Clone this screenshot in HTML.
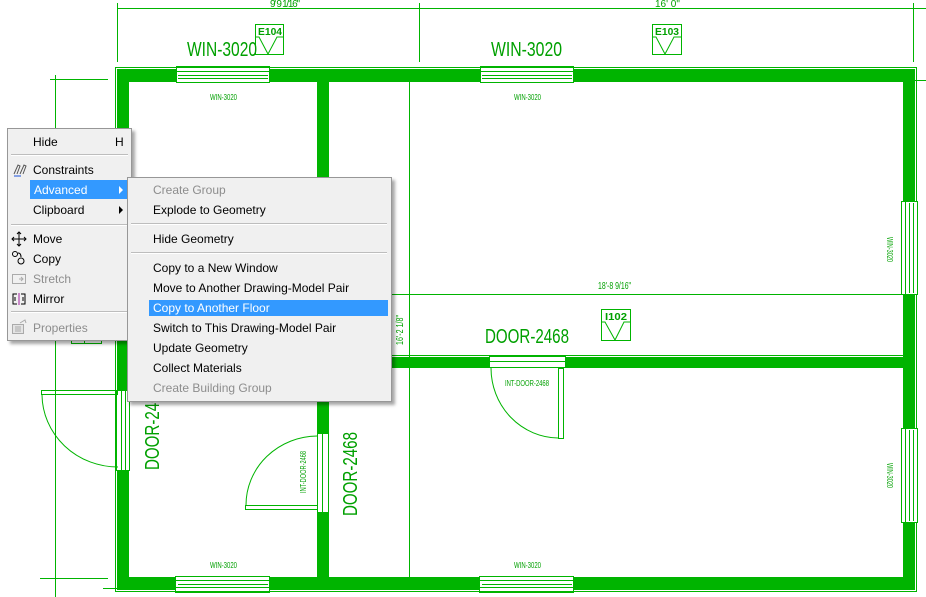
<!DOCTYPE html>
<html><head><meta charset="utf-8"><style>
html,body{margin:0;padding:0;width:926px;height:597px;overflow:hidden;background:#fff;font-family:"Liberation Sans",sans-serif}
svg{position:absolute;left:0;top:0}
.menu{position:absolute;background:#f0f0f0;border:1px solid #979797;box-shadow:3px 3px 3px rgba(0,0,0,0.35);font-size:12px;color:#000}
.it{position:absolute;height:19px;line-height:20px;white-space:nowrap}
.dis{color:#8d8d8d}
.hl{background:#3399ff;color:#fff}
.sep{position:absolute;height:1px;background:#bdbdbd;border-bottom:1px solid #fff}
.arr{position:absolute;width:0;height:0;border-top:4px solid transparent;border-bottom:4px solid transparent;border-left:4px solid #000}
</style></head><body>
<svg width="926" height="597" viewBox="0 0 926 597" xmlns="http://www.w3.org/2000/svg" font-family="Liberation Sans, sans-serif">
<g stroke="#00b400" fill="none" stroke-width="1">
<line x1="117" y1="8.5" x2="926" y2="8.5"/>
<line x1="117.5" y1="3" x2="117.5" y2="62"/>
<line x1="419.5" y1="3" x2="419.5" y2="62"/>
<line x1="913.5" y1="3" x2="913.5" y2="62"/>
<line x1="909" y1="80.5" x2="926" y2="80.5"/>
<line x1="50" y1="79.5" x2="108" y2="79.5"/>
<line x1="55.5" y1="75" x2="55.5" y2="597"/>
<line x1="40" y1="578.5" x2="108" y2="578.5"/>
<line x1="103" y1="588.5" x2="117" y2="588.5"/>
<rect x="115.5" y="67.5" width="801" height="524"/>
<line x1="328.5" y1="82" x2="328.5" y2="357"/>
<line x1="328.5" y1="368" x2="328.5" y2="577"/>
<line x1="409.5" y1="82" x2="409.5" y2="577"/>
<line x1="329" y1="294.5" x2="903" y2="294.5"/>
<line x1="329" y1="355.5" x2="903" y2="355.5"/>
</g>
<g fill="#00b400">
<rect x="117" y="69" width="798" height="13"/>
<rect x="117" y="577" width="798" height="13"/>
<rect x="117" y="69" width="12" height="521"/>
<rect x="903" y="69" width="12" height="521"/>
<rect x="317" y="69" width="11" height="364"/>
<rect x="317" y="512" width="11" height="78"/>
<rect x="328" y="357" width="575" height="11"/>
</g>
<g fill="#fff">
<rect x="176" y="68" width="93" height="15"/>
<rect x="480" y="68" width="93" height="15"/>
<rect x="176" y="576" width="93" height="15"/>
<rect x="480" y="576" width="93" height="15"/>
<rect x="901" y="201" width="16" height="93"/>
<rect x="901" y="428" width="16" height="94"/>
<rect x="489" y="357" width="76" height="11"/>
<rect x="316" y="433" width="13" height="79"/>
<rect x="116" y="390" width="14" height="80"/>
</g>
<g stroke="#00b400" fill="none" stroke-width="1">
<rect x="176.5" y="66.5" width="93" height="16"/><line x1="176" y1="71.5" x2="269" y2="71.5"/><line x1="178" y1="75.5" x2="268" y2="75.5"/><line x1="178" y1="78.5" x2="268" y2="78.5"/>
<rect x="480.5" y="66.5" width="93" height="16"/><line x1="480" y1="71.5" x2="573" y2="71.5"/><line x1="482" y1="75.5" x2="572" y2="75.5"/><line x1="482" y1="78.5" x2="572" y2="78.5"/>
<rect x="175.5" y="576.5" width="94" height="16"/><line x1="176" y1="580.5" x2="269" y2="580.5"/><line x1="178" y1="584.5" x2="268" y2="584.5"/><line x1="176" y1="587.5" x2="269" y2="587.5"/>
<rect x="479.5" y="576.5" width="94" height="16"/><line x1="480" y1="580.5" x2="573" y2="580.5"/><line x1="482" y1="584.5" x2="572" y2="584.5"/><line x1="480" y1="587.5" x2="573" y2="587.5"/>
<rect x="901.5" y="201.5" width="16" height="93"/><line x1="905.5" y1="201" x2="905.5" y2="294"/><line x1="909.5" y1="203" x2="909.5" y2="293"/><line x1="913.5" y1="203" x2="913.5" y2="293"/>
<rect x="901.5" y="428.5" width="16" height="94"/><line x1="905.5" y1="428" x2="905.5" y2="522"/><line x1="909.5" y1="430" x2="909.5" y2="521"/><line x1="913.5" y1="430" x2="913.5" y2="521"/>
<rect x="489.5" y="356.5" width="76" height="11"/><line x1="490" y1="361.5" x2="565" y2="361.5"/>
<rect x="558.5" y="368.5" width="5" height="70"/>
<path d="M491 368 A68 70 0 0 0 558 438"/>
<rect x="317.5" y="433.5" width="11" height="79"/><line x1="322.5" y1="433" x2="322.5" y2="512"/>
<rect x="245.5" y="505.5" width="72" height="4"/>
<path d="M317 436 A72 69 0 0 0 246 505"/>
<rect x="116.5" y="390.5" width="13" height="80"/><line x1="121.5" y1="390" x2="121.5" y2="470"/><line x1="125.5" y1="390" x2="125.5" y2="470"/>
<rect x="41.5" y="390.5" width="76" height="4"/>
<path d="M42 395 A76 73 0 0 0 118 467"/>
<line x1="71" y1="343.5" x2="102" y2="343.5"/><line x1="71.5" y1="340" x2="71.5" y2="344"/><line x1="84.5" y1="340" x2="84.5" y2="344"/><line x1="101.5" y1="340" x2="101.5" y2="344"/>
<rect x="255.5" y="24.5" width="28" height="30"/><path d="M256 37 H259 L268 54 L277 37 H283"/>
<rect x="652.5" y="24.5" width="29" height="30"/><path d="M653 37 H656 L665 54 L674 37 H681"/>
<rect x="601.5" y="309.5" width="29" height="31"/><path d="M602 322 H605 L615 340 L624 322 H630"/>
</g>
<g fill="#00a000">
<text x="270" y="7" font-size="10" textLength="30">9' 9 1/16"</text>
<text x="655" y="7" font-size="10">16' 0"</text>
<text x="187" y="56" font-size="20" textLength="70" lengthAdjust="spacingAndGlyphs">WIN-3020</text>
<text x="491" y="56" font-size="20" textLength="71" lengthAdjust="spacingAndGlyphs">WIN-3020</text>
<text x="258" y="35" font-size="10" font-weight="bold" textLength="24" lengthAdjust="spacingAndGlyphs">E104</text>
<text x="655" y="35" font-size="10" font-weight="bold" textLength="24" lengthAdjust="spacingAndGlyphs">E103</text>
<text x="605" y="320" font-size="10" font-weight="bold" textLength="22" lengthAdjust="spacingAndGlyphs">I102</text>
<text x="210" y="100" font-size="8" textLength="27" lengthAdjust="spacingAndGlyphs">WIN-3020</text>
<text x="514" y="100" font-size="8" textLength="27" lengthAdjust="spacingAndGlyphs">WIN-3020</text>
<text x="210" y="568" font-size="8" textLength="27" lengthAdjust="spacingAndGlyphs">WIN-3020</text>
<text x="514" y="568" font-size="8" textLength="27" lengthAdjust="spacingAndGlyphs">WIN-3020</text>
<text x="598" y="289" font-size="10" textLength="33" lengthAdjust="spacingAndGlyphs">18'-8 9/16"</text>
<text x="485" y="343" font-size="20" textLength="84" lengthAdjust="spacingAndGlyphs">DOOR-2468</text>
<text x="505" y="386" font-size="8" textLength="44" lengthAdjust="spacingAndGlyphs">INT-DOOR-2468</text>
<text transform="translate(357,516) rotate(-90)" font-size="20" textLength="84" lengthAdjust="spacingAndGlyphs">DOOR-2468</text>
<text transform="translate(159,470) rotate(-90)" font-size="20" textLength="84" lengthAdjust="spacingAndGlyphs">DOOR-2468</text>
<text transform="translate(306,493) rotate(-90)" font-size="8" textLength="42" lengthAdjust="spacingAndGlyphs">INT-DOOR-2468</text>
<text transform="translate(403,345) rotate(-90)" font-size="10" textLength="30" lengthAdjust="spacingAndGlyphs">16'-2 1/8"</text>
<text transform="translate(887,237) rotate(90)" font-size="8" textLength="25" lengthAdjust="spacingAndGlyphs">WIN-3020</text>
<text transform="translate(887,463) rotate(90)" font-size="8" textLength="25" lengthAdjust="spacingAndGlyphs">WIN-3020</text>
</g>
</svg>

<div class="menu" style="left:7px;top:128px;width:123px;height:211px">
  <div class="it" style="left:25px;top:3px">Hide</div><div class="it" style="left:107px;top:3px">H</div>
  <div class="sep" style="left:3px;top:25px;width:117px"></div>
  <svg width="16" height="16" style="left:4px;top:33px" viewBox="0 0 16 16"><path d="M2 12 L6 3 L8 4 L5 12 M8 12 L12 3 L14 4 L11 12" stroke="#555" fill="none"/><path d="M2 14 H9" stroke="#1a4fd8"/></svg>
  <div class="it" style="left:25px;top:31px">Constraints</div>
  <div class="it hl" style="left:22px;top:51px;width:98px;padding-left:4px;box-sizing:border-box">Advanced</div>
  <div class="arr" style="left:111px;top:57px;border-left-color:#fff"></div>
  <div class="it" style="left:25px;top:71px">Clipboard</div>
  <div class="arr" style="left:111px;top:77px"></div>
  <div class="sep" style="left:3px;top:95px;width:117px"></div>
  <svg width="16" height="16" style="left:3px;top:102px" viewBox="0 0 16 16"><path d="M8 1 V15 M1 8 H15 M6 3 L8 1 L10 3 M6 13 L8 15 L10 13 M3 6 L1 8 L3 10 M13 6 L15 8 L13 10" stroke="#000" fill="none"/></svg>
  <div class="it" style="left:25px;top:100px">Move</div>
  <svg width="16" height="16" style="left:3px;top:121px" viewBox="0 0 16 16"><circle cx="4" cy="4" r="2.5" stroke="#000" fill="none"/><circle cx="10" cy="11" r="3" stroke="#000" fill="none"/><path d="M7 3 Q10 3 10 7" stroke="#000" fill="none"/></svg>
  <div class="it" style="left:25px;top:120px">Copy</div>
  <svg width="16" height="16" style="left:3px;top:142px" viewBox="0 0 16 16"><rect x="1.5" y="3.5" width="13" height="9" stroke="#aaa" fill="none"/><path d="M8 8 H12 M10 6 L12 8 L10 10" stroke="#aaa" fill="none"/></svg>
  <div class="it dis" style="left:25px;top:140px">Stretch</div>
  <svg width="16" height="16" style="left:3px;top:162px" viewBox="0 0 16 16"><path d="M6 3 H2 V13 H6 M4 6 V10 M10 3 H14 V13 H10 M12 6 V10" stroke="#000" fill="none"/><path d="M8 2 V14" stroke="#a020a0"/></svg>
  <div class="it" style="left:25px;top:160px">Mirror</div>
  <div class="sep" style="left:3px;top:182px;width:117px"></div>
  <svg width="16" height="16" style="left:3px;top:190px" viewBox="0 0 16 16"><rect x="1.5" y="5.5" width="11" height="9" stroke="#aaa" fill="#e4e4e4"/><path d="M4 8 H10 M4 10 H10 M4 12 H10 M9 4 L14 1 L15 4" stroke="#aaa" fill="none"/></svg>
  <div class="it dis" style="left:25px;top:189px">Properties</div>
</div>

<div class="menu" style="left:127px;top:177px;width:263px;height:223px">
  <div class="it dis" style="left:25px;top:2px">Create Group</div>
  <div class="it" style="left:25px;top:22px">Explode to Geometry</div>
  <div class="sep" style="left:3px;top:45px;width:256px"></div>
  <div class="it" style="left:25px;top:51px">Hide Geometry</div>
  <div class="sep" style="left:3px;top:74px;width:256px"></div>
  <div class="it" style="left:25px;top:80px">Copy to a New Window</div>
  <div class="it" style="left:25px;top:100px">Move to Another Drawing-Model Pair</div>
  <div class="it hl" style="left:21px;top:122px;width:239px;height:16px;line-height:16px;padding-left:4px;box-sizing:border-box">Copy to Another Floor</div>
  <div class="it" style="left:25px;top:140px">Switch to This Drawing-Model Pair</div>
  <div class="it" style="left:25px;top:160px">Update Geometry</div>
  <div class="it" style="left:25px;top:180px">Collect Materials</div>
  <div class="it dis" style="left:25px;top:200px">Create Building Group</div>
</div>
</body></html>
